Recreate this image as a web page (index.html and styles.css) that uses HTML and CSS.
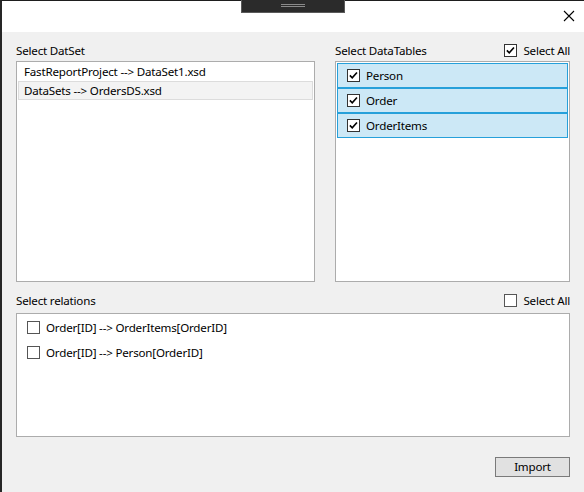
FILE: index.html
```html
<!DOCTYPE html>
<html>
<head>
<meta charset="utf-8">
<link rel="stylesheet" href="styles.css">
</head>
<body>
<div class="window">
  <div class="grip-tab"><span class="grip-line"></span><span class="grip-line"></span></div>
  <div class="titlebar">
    <svg class="close" width="12" height="12" viewBox="0 0 12 12"><path d="M1 1 L11 11 M11 1 L1 11" stroke="#000" stroke-width="1.1" fill="none"/></svg>
  </div>
  <div class="content">
    <div class="top">
      <div class="col col-left">
        <div class="header"><span class="label">Select DatSet</span></div>
        <div class="listbox">
          <div class="ds-item">FastReportProject --&gt; DataSet1.xsd</div>
          <div class="ds-item ds-selected">DataSets --&gt; OrdersDS.xsd</div>
        </div>
      </div>
      <div class="col col-right">
        <div class="header">
          <span class="label">Select DataTables</span>
          <span class="check-label"><span class="cb checked"><svg viewBox="0 0 13 13"><path d="M2.2 6.4 L5 9.3 L10.6 2.9" stroke="#000" stroke-width="1.9" fill="none"/></svg></span>Select All</span>
        </div>
        <div class="listbox">
          <div class="tbl-item"><span class="cb checked"><svg viewBox="0 0 13 13"><path d="M2.2 6.4 L5 9.3 L10.6 2.9" stroke="#000" stroke-width="1.9" fill="none"/></svg></span>Person</div>
          <div class="tbl-item"><span class="cb checked"><svg viewBox="0 0 13 13"><path d="M2.2 6.4 L5 9.3 L10.6 2.9" stroke="#000" stroke-width="1.9" fill="none"/></svg></span>Order</div>
          <div class="tbl-item"><span class="cb checked"><svg viewBox="0 0 13 13"><path d="M2.2 6.4 L5 9.3 L10.6 2.9" stroke="#000" stroke-width="1.9" fill="none"/></svg></span>OrderItems</div>
        </div>
      </div>
    </div>
    <div class="rel-header header">
      <span class="label">Select relations</span>
      <span class="check-label"><span class="cb"></span>Select All</span>
    </div>
    <div class="listbox rel-box">
      <div class="rel-item"><span class="cb"></span>Order[ID] --&gt; OrderItems[OrderID]</div>
      <div class="rel-item"><span class="cb"></span>Order[ID] --&gt; Person[OrderID]</div>
    </div>
    <div class="footer">
      <button class="btn">Import</button>
    </div>
  </div>
</div>
</body>
</html>
```

FILE: styles.css
```css
* { box-sizing: border-box; }
html, body { margin: 0; padding: 0; }
body {
  width: 584px;
  height: 492px;
  overflow: hidden;
  font-family: "Segoe UI", "Noto Sans", sans-serif;
  font-size: 11.6px;
  letter-spacing: -0.2px;
  color: #000;
}
.window {
  position: relative;
  width: 584px;
  height: 492px;
  border-top: 1px solid #1e1e1e;
  border-left: 2px solid #262626;
  display: flex;
  flex-direction: column;
  background: #f0f0f0;
}
.grip-tab {
  position: absolute;
  left: 239px;
  top: -1px;
  width: 104px;
  height: 13px;
  background: #2b2b2b;
  border: 1px solid #5a5a5a;
  border-top: none;
  display: flex;
  flex-direction: column;
  align-items: center;
  padding-top: 4px;
  gap: 1px;
}
.grip-line {
  display: block;
  width: 24px;
  height: 1px;
  background: #8a8a8a;
}
.titlebar {
  height: 31px;
  background: #fff;
  display: flex;
  justify-content: flex-end;
  align-items: flex-start;
  padding: 9px 9px 0 0;
}
.close { display: block; }
.content {
  flex: 1;
  padding: 8px 14px 0 14px;
  display: flex;
  flex-direction: column;
}
.top {
  display: flex;
  gap: 20px;
}
.col { display: flex; flex-direction: column; }
.col-left { width: 299px; }
.col-right { width: 235px; }
.header {
  height: 21px;
  display: flex;
  align-items: center;
  justify-content: space-between;
  padding-bottom: 1px;
}
.check-label {
  display: flex;
  align-items: center;
  gap: 6px;
}
.listbox {
  background: #fff;
  border: 1px solid #acacac;
  height: 221px;
  display: flex;
  flex-direction: column;
}
.col-right .listbox { padding: 1px; }
.ds-item {
  height: 19px;
  display: flex;
  align-items: center;
  padding-left: 6px;
  border: 1px solid transparent;
}
.ds-selected {
  background: #f3f3f3;
  border-color: #dcdcdc;
  margin: 0 1px;
  padding-left: 5px;
}
.tbl-item {
  height: 25px;
  background: #cce8f6;
  border: 1px solid #26a0da;
  display: flex;
  align-items: center;
  padding-left: 9px;
  gap: 6px;
}
.cb {
  width: 13px;
  height: 13px;
  border: 1px solid #333;
  background: #fff;
  display: inline-block;
  flex: none;
}
.cb svg { display: block; width: 11px; height: 11px; }
.rel-header {
  margin-top: 8px;
  height: 23px;
  padding-bottom: 2px;
}
.rel-box {
  height: 124px;
  padding-top: 1px;
}
.rel-item {
  height: 25px;
  display: flex;
  align-items: center;
  padding-left: 10px;
  gap: 6px;
}
.rel-item .cb, .rel-header .cb { border-color: #555; }
.footer {
  margin-top: 20px;
  display: flex;
  justify-content: flex-end;
}
.btn {
  width: 75px;
  height: 20px;
  background: #e1e1e1;
  border: 1px solid #7a7a7a;
  font-family: "Segoe UI", "Noto Sans", sans-serif;
  font-size: 11.6px;
  letter-spacing: -0.2px;
  color: #000;
  padding: 0;
  margin: 0;
  line-height: 16px;
}
```
